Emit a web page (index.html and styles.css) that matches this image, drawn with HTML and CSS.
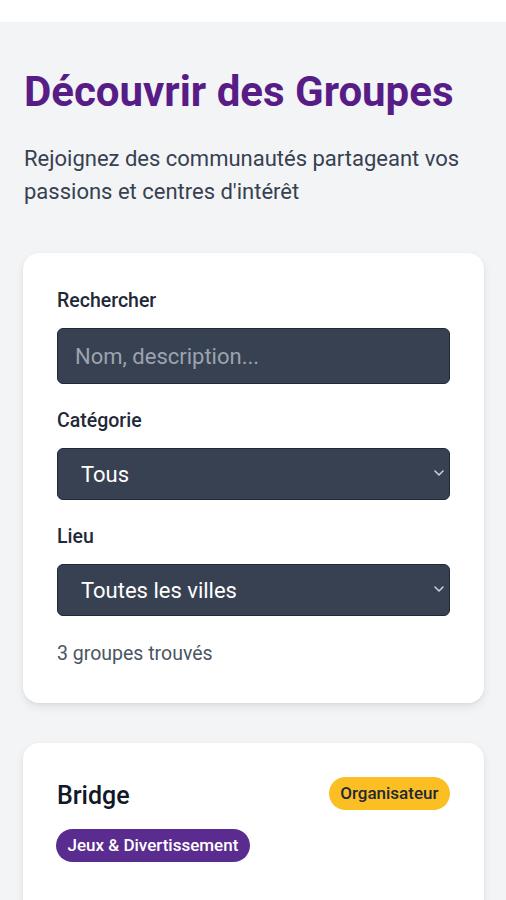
FILE: index.html
```html
<!DOCTYPE html>
<html lang="fr">
<head>
    <meta charset="UTF-8">
    <title>Découvrir des Groupes</title>
    <link rel="stylesheet" href="styles.css">
</head>
<body>

<div class="topbar"></div>

<main class="page">
    <h1>Découvrir des Groupes</h1>
    <p class="intro">Rejoignez des communautés partageant vos passions et centres d'intérêt</p>

    <section class="card filtres">
        <label for="recherche">Rechercher</label>
        <input type="text" id="recherche" placeholder="Nom, description...">

        <label for="categorie">Catégorie</label>
        <div class="select-wrap">
            <select id="categorie">
                <option>Tous</option>
            </select>
            <svg class="chevron" viewBox="0 0 10 6" width="10" height="6"><path d="M1 1l4 4 4-4" fill="none" stroke="#cbd5e1" stroke-width="1.5" stroke-linecap="round" stroke-linejoin="round"/></svg>
        </div>

        <label for="lieu">Lieu</label>
        <div class="select-wrap">
            <select id="lieu">
                <option>Toutes les villes</option>
            </select>
            <svg class="chevron" viewBox="0 0 10 6" width="10" height="6"><path d="M1 1l4 4 4-4" fill="none" stroke="#cbd5e1" stroke-width="1.5" stroke-linecap="round" stroke-linejoin="round"/></svg>
        </div>

        <p class="compte">3 groupes trouvés</p>
    </section>

    <section class="card groupe">
        <div class="groupe-head">
            <h3>Bridge</h3>
            <span class="badge orga">Organisateur</span>
        </div>
        <span class="badge cat">Jeux &amp; Divertissement</span>
    </section>
</main>

</body>
</html>
```

FILE: styles.css
```css
body {
    margin: 0;
    font-family: Roboto, 'Noto Sans', sans-serif;
    background-color: #f3f4f6;
}
.topbar {
    height: 22px;
    background: #fff;
}
.page {
    padding: 45px 22px 0 23px;
}
h1 {
    margin: 0 0 0 1px;
    font-size: 42px;
    line-height: 50px;
    font-weight: 700;
    color: #581c87;
}
.intro {
    margin: 25px 0 0 1px;
    font-size: 22px;
    line-height: 33px;
    color: #374151;
}
.card {
    background: #fff;
    border-radius: 16px;
    box-shadow: 0 4px 10px rgba(0, 0, 0, 0.08), 0 1px 3px rgba(0, 0, 0, 0.05);
}
.filtres {
    margin-top: 45px;
    padding: 36px 34px 37px 34px;
    display: flex;
    flex-direction: column;
}
label {
    font-size: 19.5px;
    line-height: 24px;
    font-weight: 500;
    color: #1f2937;
    margin-bottom: 15px;
}
input, select {
    box-sizing: border-box;
    width: 100%;
    font-family: inherit;
    font-size: 22px;
    color: #fff;
    background: #374151;
    border: 1px solid #1f2937;
    border-radius: 6px;
    margin: 0 0 25px 0;
}
input {
    height: 56px;
    padding: 0 17px;
}
input::placeholder {
    color: #9ca3af;
}
.select-wrap {
    position: relative;
}
select {
    height: 52px;
    padding: 0 23px;
    appearance: none;
    -webkit-appearance: none;
}
.chevron {
    position: absolute;
    right: 6px;
    top: 22px;
}
.compte {
    margin: 1px 0 0 0;
    font-size: 19.5px;
    line-height: 24px;
    color: #4b5563;
}
.groupe {
    margin-top: 40px;
    padding: 34px 34px 60px 33px;
}
.groupe-head {
    display: flex;
    justify-content: space-between;
    align-items: flex-start;
    margin-bottom: 17px;
}
h3 {
    margin: 2px 0 0 1px;
    font-size: 25px;
    line-height: 33px;
    font-weight: 500;
    color: #111827;
}
.badge {
    display: inline-block;
    font-size: 17px;
    font-weight: 500;
    line-height: 21px;
    padding: 6px 11.5px;
    border-radius: 999px;
}
.orga {
    background: #fbbf24;
    color: #1f2937;
}
.cat {
    background: #5b2c8f;
    color: #fff;
}
```
